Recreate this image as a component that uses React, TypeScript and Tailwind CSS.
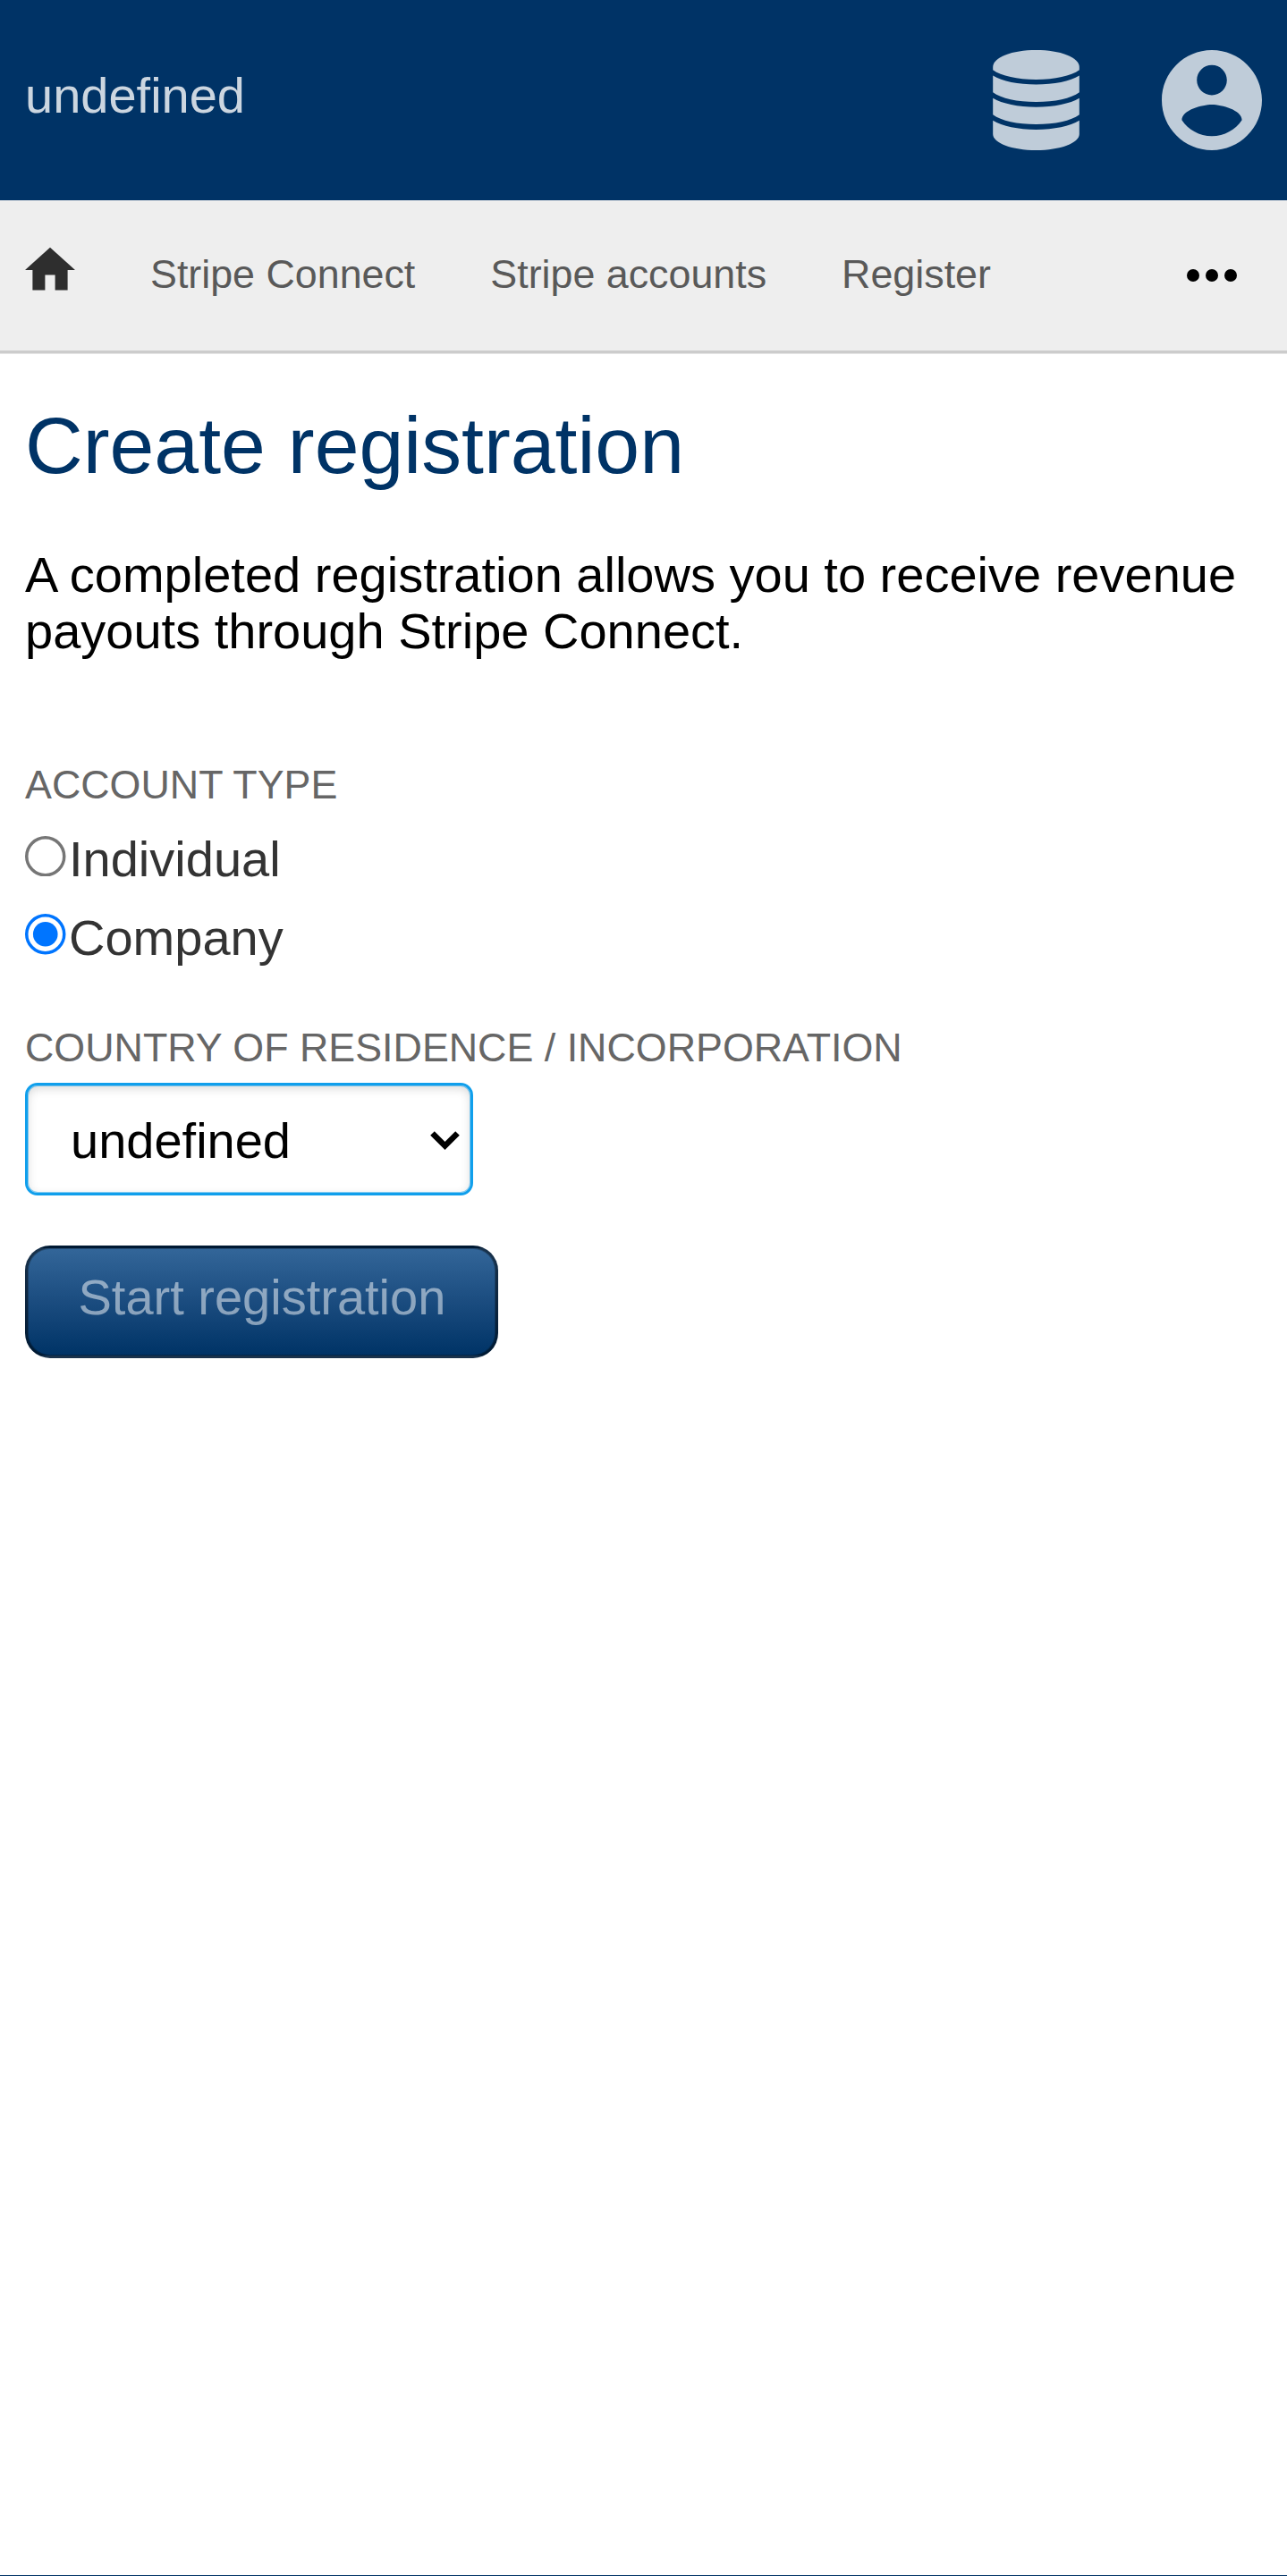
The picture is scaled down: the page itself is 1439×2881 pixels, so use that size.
import React from "react";

const navItems = ["Stripe Connect", "Stripe accounts", "Register"];

function DatabaseIcon() {
  return (
    <svg className="h-28 w-[97px]" viewBox="0.5 0 97 112" fill="currentColor">
      <path d="M0.7 19C0.7 8 22 0 49 0s48.3 8 48.3 19v3.3C88 29 70 33 49 33S10 29 0.7 22.3z" />
      <path d="M0.7 28.6C11 35 29 38.6 49 38.6S87 35 97.3 28.6v18.6C88 54 70 58 49 58S10 54 0.7 47.2z" />
      <path d="M0.7 53.8C11 60 29 63.7 49 63.7S87 60 97.3 53.8v18.4C88 79 70 83 49 83S10 79 0.7 72.2z" />
      <path d="M0.7 78.8C11 85 29 89 49 89S87 85 97.3 78.8V94c0 10-21.3 18-48.3 18S0.7 104 0.7 94z" />
    </svg>
  );
}

function AccountIcon() {
  return (
    <svg className="size-28" viewBox="2 2 20 20" fill="currentColor">
      <path d="M12 2C6.48 2 2 6.48 2 12s4.48 10 10 10 10-4.48 10-10S17.52 2 12 2zm0 3c1.66 0 3 1.34 3 3s-1.34 3-3 3-3-1.34-3-3 1.34-3 3-3zm0 14.2c-2.5 0-4.71-1.28-6-3.22.03-1.99 4-3.08 6-3.08 1.99 0 5.97 1.09 6 3.08-1.29 1.94-3.5 3.22-6 3.22z" />
    </svg>
  );
}

function Radio({ label, checked }: { label: string; checked?: boolean }) {
  return (
    <label className="flex h-[87.5px] items-start gap-[3.5px] text-[#333]">
      <svg className="mt-[5.5px] size-[45.5px]" viewBox="0 0 13 13">
        <circle cx="6.5" cy="6.5" r="6" fill="#fff" stroke={checked ? "#0075ff" : "#767676"} />
        {checked && <circle cx="6.5" cy="6.5" r="3.95" fill="#0075ff" />}
      </svg>
      <span>{label}</span>
    </label>
  );
}

export default function App() {
  return (
    <div className="flex h-[2881px] w-full flex-col overflow-hidden border-b border-[#003366] bg-white font-['Liberation_Sans',Arial,sans-serif] text-[56px] leading-[63px] text-black">
      <header className="flex h-56 shrink-0 items-start justify-between bg-[#003366] px-7">
        <span className="mt-[75px] text-[#ccd6e0]">undefined</span>
        <div className="mt-14 flex gap-[92px] text-[#bfccd9]">
          <DatabaseIcon />
          <AccountIcon />
        </div>
      </header>

      <nav className="flex h-[171px] shrink-0 items-start border-b-[3px] border-[#ccc] bg-[#eee] pl-7 pr-14 text-[44.8px] leading-[50px] text-[#595959] shadow-[0_1px_0_#e5e5e5]">
        <svg className="mt-[50px] size-14 text-[#2e2e2e]" viewBox="2 2 20 20" fill="currentColor">
          <path d="M10 20v-6h4v6h5v-8h3L12 3 2 12h3v8z" />
        </svg>
        <div className="ml-[84px] mt-[57px] flex gap-[84px]">
          {navItems.map((item) => (
            <a key={item}>{item}</a>
          ))}
        </div>
        <svg className="ml-auto mt-14 size-14" viewBox="0 0 16 16" fill="#000">
          <circle cx="2" cy="8" r="2" />
          <circle cx="8" cy="8" r="2" />
          <circle cx="14" cy="8" r="2" />
        </svg>
      </nav>

      <main className="flex flex-col items-start px-7 pt-[53px]">
        <h1 className="text-[89.6px] leading-[100px] text-[#003366]">Create registration</h1>
        <p className="mt-[63px]">
          A completed registration allows you to receive revenue payouts through Stripe Connect.
        </p>

        <h2 className="mt-[115px] text-[44.8px] leading-[50px] text-[#666]">ACCOUNT TYPE</h2>
        <div className="mt-[27px]">
          <Radio label="Individual" />
          <Radio label="Company" checked />
        </div>

        <h2 className="mt-[42px] text-[44.8px] leading-[50px] text-[#666]">
          COUNTRY OF RESIDENCE / INCORPORATION
        </h2>
        <div className="mt-[15px] flex h-[126px] w-[501px] items-start justify-between rounded-[14px] border-[3px] border-[#109fec] bg-white pl-12 pr-[12.5px] pt-[30px] shadow-[inset_0_0_0_1px_rgba(16,159,236,0.5),inset_0_3.5px_10.5px_rgba(0,0,0,0.15)]">
          <span>undefined</span>
          <svg className="mt-[21px] h-[22px] w-[33px]" viewBox="0 0 33 22" fill="none" stroke="#000" strokeWidth="6.5">
            <path d="M2.5 2.5 16.5 16.5 30.5 2.5" />
          </svg>
        </div>

        <button className="mt-14 h-[126px] w-[528.5px] rounded-[28px] border-[3px] border-black/50 bg-linear-to-b from-[#336699] to-[#003366] pb-[11px] pl-[56.5px] text-left text-white/50 shadow-[inset_0_0_0_1px_rgba(0,0,0,0.25)]">
          Start registration
        </button>
      </main>
    </div>
  );
}
